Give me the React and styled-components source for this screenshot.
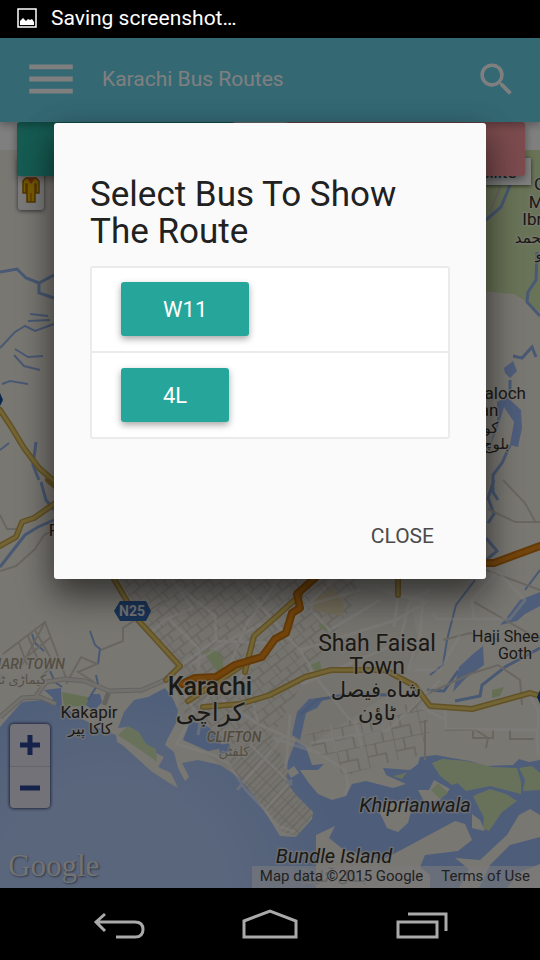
import React from "react";
import styled, { createGlobalStyle } from "styled-components";
import { MdMenu, MdSearch } from "react-icons/md";

const GlobalStyle = createGlobalStyle`
  *, *::before, *::after { box-sizing: border-box; }
  body { margin: 0; background: #000; font-family: Roboto, "DejaVu Sans", sans-serif; }
  button { font: inherit; border: 0; padding: 0; background: none; cursor: pointer; }
  h1, h2, ul { margin: 0; padding: 0; font-weight: 400; }
`;

const Screen = styled.div`
  display: flex;
  flex-direction: column;
  min-height: 100vh;
`;

const StatusBar = styled.header`
  display: flex;
  align-items: center;
  gap: 14px;
  height: 38px;
  padding: 0 17px 2px;
  background: #000;
  color: #fff;
  font-size: 21px;
`;

const WebView = styled.main`
  position: relative;
  flex: 1;
  display: flex;
  flex-direction: column;
  overflow: hidden;
  background: #fff;
`;

const AppBar = styled.div`
  position: relative;
  z-index: 2;
  display: flex;
  align-items: center;
  height: 84px;
  padding: 0 22px 2px;
  background: #68d2e8;
  color: #fff;
  box-shadow: 0 3px 8px rgba(0, 0, 0, 0.3);
`;

const BarButton = styled.button`
  display: flex;
  color: #fff;
  font-size: ${(p) => p.$size};
`;

const Title = styled.h1`
  flex: 1;
  margin-left: 22px;
  font-size: 21px;
`;

const ActionStrip = styled.div`
  position: relative;
  z-index: 1;
  display: flex;
  justify-content: space-between;
  align-items: flex-start;
  height: 28px;
  padding: 0 15px 0 17px;
`;

const StripButton = styled.button`
  width: ${(p) => p.$width};
  height: 54px;
  border-radius: 3px;
  background: ${(p) => p.$color};
  box-shadow: 0 3px 8px rgba(0, 0, 0, 0.4);
`;

const MapArea = styled.section`
  position: relative;
  flex: 1;
  display: flex;
  min-height: 0;
`;

const MapCanvas = styled.svg`
  flex: 1;
  width: 100%;
  height: 100%;
  display: block;
`;

const Pegman = styled.button`
  position: absolute;
  left: 18px;
  top: 8px;
  width: 26px;
  height: 52px;
  display: flex;
  align-items: flex-end;
  justify-content: center;
  padding-bottom: 7px;
  border-radius: 3px;
  background: #f4f4f4;
  box-shadow: 0 1px 4px rgba(0, 0, 0, 0.6);
`;

const MapType = styled.button`
  position: absolute;
  right: 9px;
  top: 8px;
  width: 90px;
  height: 27px;
  background: #fff;
  color: #444;
  font-size: 17px;
  box-shadow: 0 1px 4px rgba(0, 0, 0, 0.6);
`;

const ZoomControl = styled.div`
  position: absolute;
  left: 10px;
  bottom: 80px;
  width: 40px;
  display: flex;
  flex-direction: column;
  border-radius: 4px;
  background: #e4e4f0;
  box-shadow: 0 0 3px 1px rgba(0, 0, 40, 0.6);
`;

const ZoomButton = styled.button`
  height: 42px;
  display: flex;
  align-items: center;
  justify-content: center;
  & + & { border-top: 1px solid #c4cad8; }
`;

const Logo = styled.div`
  position: absolute;
  left: 8px;
  bottom: 3px;
  font: 31px/38px "Liberation Serif", serif;
  color: #e4e6ea;
  text-shadow: 1px 1px 2px #5d6880;
`;

const Attribution = styled.div`
  position: absolute;
  right: 0;
  bottom: 0;
  display: flex;
  gap: 18px;
  height: 22px;
  padding: 0 10px 0 8px;
  background: rgba(245, 245, 245, 0.6);
  color: #444;
  font-size: 15px;
  line-height: 20px;
  a { color: #444; text-decoration: none; }
`;

const Overlay = styled.div`
  position: absolute;
  inset: 0;
  z-index: 3;
  background: rgba(0, 0, 0, 0.5);
`;

const Modal = styled.section`
  position: absolute;
  z-index: 4;
  top: 10%;
  left: 10%;
  right: 10%;
  padding: 53px 36px 15px;
  border-radius: 3px;
  background: #fafafa;
  box-shadow: 0 20px 36px rgba(0, 0, 0, 0.4), 0 8px 30px rgba(0, 0, 0, 0.3);
`;

const ModalTitle = styled.h2`
  margin-bottom: 16px;
  color: #212121;
  font-size: 35px;
  line-height: 37px;
`;

const RouteList = styled.ul`
  list-style: none;
  border: 2px solid #ebebeb;
  border-radius: 3px;
  background: #fff;
`;

const RouteItem = styled.li`
  padding: 14px 29px 15px;
  & + & { border-top: 2px solid #ebebeb; padding-top: 15px; }
`;

const RouteButton = styled.button`
  display: block;
  height: 54px;
  padding: 0 42px;
  border-radius: 3px;
  background: #26a69a;
  color: #fff;
  font-size: 22px;
  line-height: 53px;
  box-shadow: 0 3px 7px rgba(0, 0, 0, 0.35);
`;

const ModalFooter = styled.footer`
  display: flex;
  justify-content: flex-end;
  margin-top: 69px;
`;

const CloseButton = styled.button`
  height: 56px;
  padding: 0 16px;
  color: #4a4a4a;
  font-size: 21px;
`;

const NavBar = styled.nav`
  display: grid;
  grid-template-columns: repeat(3, 1fr);
  height: 72px;
  padding: 0 8%;
  background: #000;
`;

const NavButton = styled.button`
  display: flex;
  align-items: center;
  justify-content: center;
  padding-top: 6px;
`;

const NavGlyph = styled.svg`
  width: 60px;
  height: 36px;
  fill: none;
  stroke: #aaa;
  stroke-width: 3;
`;

const MapLabel = styled.text`
  font-family: Roboto, "DejaVu Sans", sans-serif;
  font-size: ${(p) => p.$size}px;
  font-weight: ${(p) => p.$weight || 400};
  font-style: ${(p) => (p.$italic ? "italic" : "normal")};
  fill: ${(p) => p.$fill || "#37342c"};
  stroke: #f5f1e8;
  stroke-opacity: 0.6;
  stroke-width: 3px;
  stroke-linejoin: round;
  paint-order: stroke;
  text-anchor: middle;
`;

const places = [
  { text: "Karachi", x: 210, y: 695, size: 25, weight: 500 },
  { text: "کراچی", x: 210, y: 721, size: 25 },
  { text: "Kakapir", x: 89, y: 718, size: 17 },
  { text: "کاکا پیر", x: 90, y: 734, size: 15 },
  { text: "Shah Faisal", x: 377, y: 651, size: 23 },
  { text: "Town", x: 377, y: 674, size: 23 },
  { text: "شاه فیصل", x: 376, y: 697, size: 21 },
  { text: "ٹاؤن", x: 377, y: 720, size: 21 },
  { text: "Haji Sheedi", x: 512, y: 642, size: 16 },
  { text: "Goth", x: 515, y: 659, size: 16 },
  { text: "Baloch", x: 500, y: 399, size: 17 },
  { text: "Khan", x: 479, y: 416, size: 17 },
  { text: "کوٹ", x: 484, y: 433, size: 15 },
  { text: "بلوچ", x: 496, y: 449, size: 15 },
  { text: "Goth", x: 552, y: 190, size: 17 },
  { text: "Mir", x: 541, y: 208, size: 17 },
  { text: "Ibrahim", x: 551, y: 225, size: 17 },
  { text: "محمد", x: 532, y: 243, size: 15 },
  { text: "گو", x: 543, y: 259, size: 15 },
  { text: "Pir", x: 59, y: 536, size: 17 },
  { text: "MARI TOWN", x: 27, y: 669, size: 14, weight: 500, italic: true, fill: "#a69c85" },
  { text: "کیماڑی ٹا", x: 22, y: 684, size: 13, fill: "#aaa28f" },
  { text: "CLIFTON", x: 234, y: 742, size: 14, weight: 500, italic: true, fill: "#a39579" },
  { text: "کلفٹن", x: 234, y: 756, size: 13, fill: "#a99f8b" },
  { text: "Khiprianwala", x: 415, y: 812, size: 20, italic: true },
  { text: "Bundle Island", x: 334, y: 863, size: 20, italic: true },
  { text: "بنڈل آئلینڈ", x: 334, y: 882, size: 16, fill: "#888" },
];

function CityMap() {
  return (
    <MapCanvas viewBox="0 150 540 738" preserveAspectRatio="xMidYMin slice" role="img" aria-label="Map of Karachi">
      <defs>
        <radialGradient id="sea" gradientUnits="userSpaceOnUse" cx="110" cy="900" r="240">
          <stop offset="0.5" stopColor="#b3ccf8" />
          <stop offset="1" stopColor="#9cbbf4" />
        </radialGradient>
        <pattern id="blocks" width="22" height="18" patternUnits="userSpaceOnUse" patternTransform="rotate(-38)">
          <path d="M0 0H22M0 9H22M0 0V18M13 0V9M6 9V18" fill="none" stroke="#d2cdc3" strokeWidth="1.5" />
        </pattern>
        <pattern id="grid" width="14" height="10" patternUnits="userSpaceOnUse" patternTransform="rotate(-46)">
          <path d="M0 0H14M0 5H14M0 0V10" fill="none" stroke="#d0cbc1" strokeWidth="1.6" />
        </pattern>
        <pattern id="east" width="29" height="23" patternUnits="userSpaceOnUse" patternTransform="rotate(-12)">
          <path d="M0 0H29V23M0 12H18V23M9 0V12" fill="none" stroke="#d2cdc3" strokeWidth="1.6" />
        </pattern>
      </defs>
      <rect y="150" width="540" height="738" fill="#f2eee5" />
      <path d="M480 150H540V312L524 300 514 294 480 291Z" fill="#d2e7ae" />

      {/* built-up districts */}
      <path d="M120 579H340L410 600 420 650 395 690 310 745 286 772 300 790 313 815 297 837 280 830 250 790 220 765 195 745 178 710 180 675 150 635Z" fill="#ebe6dd" />
      <path d="M120 579H360L350 610 310 670 270 740 240 745 195 735 178 700 180 665 140 620Z" fill="url(#blocks)" />
      <path d="M240 746L275 738 286 770 300 790 313 815 297 837 280 830 250 790 228 765Z" fill="url(#grid)" />
      <path d="M305 735L380 710 425 700 430 735 420 755 380 765 345 776 315 752Z" fill="url(#east)" />
      <path d="M314 599L333 588 344 605 342 616 313 610Z" fill="#eadcb9" />
      <path d="M204 652L213 649 222 655 224 672 216 670Z M310 665l10 -4 2 10 -8 3z M318 625l6 -2 4 8 -7 -2z M62 692L93 698 85 706 64 707Z M492 690l12 -3 -4 9 -8 2z" fill="#c9dfa9" />

      {/* water */}
      <path fill="url(#sea)" d="M0 727L12 713 22 702 42 700 63 706 84 720 105 731 116 735 117 742 140 755 160 773 178 788 171 773 158 767 164 757 154 752 140 740 127 727 118 728 124 712 134 700 148 697 165 688 172 697 178 710 176 723 168 738 165 745 174 752 178 768 185 781 189 777 182 763 198 760 220 765 240 778 258 801 268 817 280 836 296 837 312 819 313 812 296 795 286 781 288 770 286 766 296 740 306 747 312 765 324 764 318 770 300 770 308 782 318 794 332 800 346 796 352 784 366 781 393 788 406 784 386 775 383 768 410 770 418 764 420 757 436 755 452 758 470 761 485 766 513 765 519 759 529 762 540 760V888H0Z" />
      <path fill="#9cbbf4" d="M183 740L190 722 203 723 218 735 223 748 208 751Z M44 690L61 688 62 707 51 703 53 698Z M86 705L91 694 100 694 102 702 94 711Z M219 745L229 743 231 751 220 755Z M297 712L309 699 325 697 317 708 306 713 300 740 292 735Z" />
      <path fill="#9cbbf4" d="M540 592L520 600 507 617 500 625 517 621 525 614 540 606Z M459 667L473 654 483 646 484 665 466 678 453 692Z M504 368L513 361 517 371 510 378 505 373Z M497 402L507 397 521 410 522 428 518 447 510 445 514 422 504 407 497 430 490 445 497 421Z" />
      <g fill="none" stroke="#92b1e6" strokeWidth="3">
        <path d="M0 272L17 269 26 278 39 283 54 275M39 283V293L54 298" />
        <path strokeWidth="2" d="M0 348L15 332 25 326 35 331 54 324M15 349L28 357 43 356M14 355L24 366 40 370M30 314L48 316M28 321L50 320M2 384L10 381 28 384M0 450L9 443" />
        <path d="M0 567L25 535 38 527 54 520M36 442L33 465 39 480M41 482L46 500 54 510" />
        <path strokeWidth="2" d="M32 634L35 643 44 651M90 631L95 645 100 649 98 664M96 675L98 684 88 700M50 671L55 682 62 687" />
        <path d="M510 185L501 207 486 220M537 252L536 280 528 292 527 302 540 316M513 356L522 358 532 347 536 357M510 395V380M510 445L502 463 493 475V492L498 500M494 480L488 498 494 514 488 523M486 538L497 551 486 560" />
        <path strokeWidth="2" d="M475 580L456 605 451 624 447 640 443 665 430 675M540 570L525 590" />
        <path d="M300 715L317 700 350 694 387 695M427 690L444 691 458 671M455 701L480 696 482 685 505 667 540 648" />
      </g>

      {/* islands */}
      <g fill="#f2eee5">
        <path d="M119 742L128 734 140 741 151 750 160 771 177 788 151 771Z" />
        <path d="M378 809L400 800 412 808 408 823 398 832 387 828Z" />
        <path d="M418 790L429 790 434 780 450 789 440 800 425 803Z" />
        <path d="M316 835L335 826 329 838 344 850 382 860 403 849 429 835 455 821 465 824 472 840 458 851 425 855 420 867 430 875V888H316Z" />
        <path d="M455 858L480 860 507 835 519 815 530 809 540 815V837L510 845 490 865 479 888H459L469 869Z" />
        <path d="M507 888L518 873 540 864V888Z M472 814L480 820 485 831 472 828Z" />
        <path d="M287 771L294 766 299 773 291 778Z" />
      </g>
      <g fill="#d1e4b7">
        <path d="M118 735L128 726 139 732 146 744 156 749 157 762 146 754 130 743Z" />
        <path d="M432 763L442 759 467 761 492 767 517 768 521 782V794L490 786 466 791 452 778 436 770Z M435 767L452 775 458 783 452 785 440 776Z" />
        <path d="M519 768L532 766 540 773V790L523 791 525 780Z" />
        <path d="M473 796L490 789 506 794 517 801 502 812 489 831 483 828 484 818Z" />
        <path d="M431 790L438 783 448 793 440 799Z M393 776L402 774 407 772 402 779Z" />
      </g>

      {/* minor roads */}
      <g fill="none" stroke="#d3cdc2" strokeWidth="2">
        <path d="M3 654L45 622 68 683M12 669L51 637M28 636L38 660M35 630L54 664M19 643L27 665M45 622L22 665M54 664L40 678M66 684L81 657 97 664 78 672 94 682" />
        <path d="M101 650L123 641V628L165 600M0 515L7 529H17M0 571L16 566 35 549 44 535 54 530M503 480L525 503 536 523M488 509L515 522H540M486 570L540 590M474 602L540 640M443 640L470 633 500 640M410 712L427 694 470 674 498 665 520 680 522 705M425 720V760M445 730H476L488 738 486 748M473 730V738H493V730M510 730V739H534M501 185L490 212" />
      </g>

      {/* shore road */}
      <path d="M0 717L22 698 40 697 56 704M36 696L46 682 65 679 85 681 109 691 142 690 165 680 181 665M109 691L104 705" fill="none" stroke="#c9c5bf" strokeWidth="5" strokeLinejoin="round" />
      {/* main streets */}
      <g fill="none" stroke="#fffdf7" strokeOpacity=".5" strokeWidth="3" strokeLinejoin="round">
        <path d="M0 717L22 698 40 697 56 704M36 696L46 682 65 679 85 681 109 691 142 690 165 680 181 665" />
        <path d="M148 635L165 620 192 608 172 579M175 584L215 616 216 640 181 665M236 579L300 650 325 690M215 641L270 643M190 665L230 640 290 610 360 590M279 579L246 625 230 665 203 705 198 735M334 579L295 618 260 655 230 690M170 620L200 650 198 670M250 690L258 724 294 740 308 748M180 686L194 711 177 744 197 750 214 755 228 763 246 790 265 810 278 826 295 832M250 745L292 785M284 735L237 790M290 715L286 768M265 810L292 780M222 700L258 724M300 650L396 620 430 600M310 610L330 630 380 600M300 685L400 642 410 600 430 590M310 743L388 730 420 700 440 680M273 738L318 753 345 770 348 785 345 795M331 725L337 752M355 721L362 748M310 670L350 720M394 627L398 596 423 600 420 635 408 670M415 670H440L460 635M433 612L436 619H510L525 600 498 572 472 600 474 618M493 575L488 560M445 707L446 729 537 730 538 755M530 696L538 710V729M422 708L446 720" />
      </g>

      {/* highways */}
      <g fill="none" strokeLinejoin="round" strokeLinecap="round">
        <g stroke="#c5a34d" strokeWidth="6">
          <path d="M0 410L10 425 24 448 39 468 54 481M0 546L16 537 22 522 34 518 54 504M48 480L55 486M114 579L138 620 180 666 166 680M188 701L220 680 250 660M398 579L398 595M203 707L240 704 270 695 305 677 331 670 385 670 415 686 430 706 472 709 530 693 540 696M245 672L254 636 278 615 300 595" />
        </g>
        <g stroke="#e6cb68" strokeWidth="3">
          <path d="M0 410L10 425 24 448 39 468 54 481M0 546L16 537 22 522 34 518 54 504M114 579L138 620 180 666 166 680M188 701L220 680 250 660M398 579L398 595M203 707L240 704 270 695 305 677 331 670 385 670 415 686 430 706 472 709 530 693 540 696M245 672L254 636 278 615 300 595" />
        </g>
        <g stroke="#c87410" strokeWidth="8"><path d="M182 684L195 678 216 677 235 665 262 657 275 639 286 633 292 613 300 608 297 594 316 577M480 563H494L540 546" /></g>
        <g stroke="#e68a18" strokeWidth="4"><path d="M182 684L195 678 216 677 235 665 262 657 275 639 286 633 292 613 300 608 297 594 316 577M480 563H494L540 546" /></g>
      </g>

      <path d="M114 611L120 601H146L151 611 146 621H120Z" fill="#3368b0" />
      <text x="132" y="616" textAnchor="middle" fontFamily="Roboto, sans-serif" fontSize="14" fontWeight="700" fill="#e5e9ee">N25</text>
      <path d="M0 393L3 400 0 406Z M540 690L537 697 540 704Z" fill="#184f9c" />

      {places.map((p) => (
        <MapLabel key={p.text + p.y} x={p.x} y={p.y} $size={p.size} $weight={p.weight} $italic={p.italic} $fill={p.fill}>
          {p.text}
        </MapLabel>
      ))}
    </MapCanvas>
  );
}

const routes = ["W11", "4L"];

export default function App() {
  return (
    <>
      <GlobalStyle />
      <Screen>
        <StatusBar>
          <svg width="20" height="20" viewBox="0 0 20 20" aria-hidden="true">
            <path d="M1 1H19V19H1Z" fill="none" stroke="#fff" strokeWidth="1.5" />
            <path d="M3 17V13L6 10 9 13 11 11 13 12 15 11 17 14V17Z" fill="#fff" />
          </svg>
          <span>Saving screenshot…</span>
        </StatusBar>
        <WebView>
          <AppBar>
            <BarButton $size="58px" aria-label="Menu"><MdMenu /></BarButton>
            <Title>Karachi Bus Routes</Title>
            <BarButton $size="43px" aria-label="Search"><MdSearch /></BarButton>
          </AppBar>
          <ActionStrip>
            <StripButton $width="43%" $color="#2cb8a6" aria-label="Show routes" />
            <StripButton $width="47%" $color="#f7979c" aria-label="Clear map" />
          </ActionStrip>
          <MapArea>
            <CityMap />
            <Pegman aria-label="Street View">
              <svg width="18" height="28" viewBox="0 0 18 28" aria-hidden="true">
                <path d="M4 3H14L17 6V18H14V9H13V27H5V9H4V18H1V6Z" fill="#f0b800" stroke="#a56a00" strokeWidth="1.5" />
                <path d="M5 3H13L9 9Z" fill="#d5552d" />
                <path d="M9 18V27" stroke="#a56a00" strokeWidth="1" />
              </svg>
            </Pegman>
            <MapType>Satellite</MapType>
            <ZoomControl>
              <ZoomButton aria-label="Zoom in">
                <svg width="20" height="20" viewBox="0 0 20 20"><path d="M0 10H20M10 0V20" stroke="#2b4694" strokeWidth="5" /></svg>
              </ZoomButton>
              <ZoomButton aria-label="Zoom out">
                <svg width="20" height="20" viewBox="0 0 20 20"><path d="M0 10H20" stroke="#2b4694" strokeWidth="5" /></svg>
              </ZoomButton>
            </ZoomControl>
            <Logo>Google</Logo>
            <Attribution>
              <span>Map data ©2015 Google</span>
              <a href="#terms">Terms of Use</a>
            </Attribution>
          </MapArea>
          <Overlay />
          <Modal role="dialog" aria-modal="true" aria-labelledby="route-title">
            <ModalTitle id="route-title">Select Bus To Show The Route</ModalTitle>
            <RouteList>
              {routes.map((r) => (
                <RouteItem key={r}><RouteButton>{r}</RouteButton></RouteItem>
              ))}
            </RouteList>
            <ModalFooter><CloseButton>CLOSE</CloseButton></ModalFooter>
          </Modal>
        </WebView>
        <NavBar>
          <NavButton aria-label="Back">
            <NavGlyph viewBox="0 0 60 36"><path d="M16 5L7 13 16 22M7 13H46Q54 13 54 20.500T46 28H27" /></NavGlyph>
          </NavButton>
          <NavButton aria-label="Home">
            <NavGlyph viewBox="0 0 60 36"><path d="M4 12L30 2 56 12V28H4Z" /></NavGlyph>
          </NavButton>
          <NavButton aria-label="Recent apps">
            <NavGlyph viewBox="0 0 60 36"><path d="M7 13H46V28H7ZM17 5H55V22" /></NavGlyph>
          </NavButton>
        </NavBar>
      </Screen>
    </>
  );
}
